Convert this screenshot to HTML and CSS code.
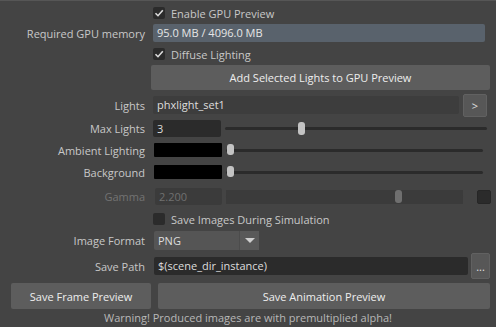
FILE: index.html
```html
<!DOCTYPE html>
<html lang="en">
<head>
    <meta charset="UTF-8">
    <title>GPU Preview</title>
    <link rel="stylesheet" href="styles.css">
</head>
<body>
    <div class="panel">
        <div class="row r-enable">
            <span class="label"></span>
            <span class="check"><span class="box on"><svg viewBox="0 0 12 12"><path d="M2.5 6.2 L5 8.7 L9.8 3.2"/></svg></span>Enable GPU Preview</span>
        </div>
        <div class="row r-memory">
            <span class="label">Required GPU memory</span>
            <div class="field memory">95.0 MB / 4096.0 MB</div>
        </div>
        <div class="row r-diffuse">
            <span class="label"></span>
            <span class="check"><span class="box on"><svg viewBox="0 0 12 12"><path d="M2.5 6.2 L5 8.7 L9.8 3.2"/></svg></span>Diffuse Lighting</span>
        </div>
        <div class="row r-add">
            <button class="btn add">Add Selected Lights to GPU Preview</button>
        </div>
        <div class="row r-lights">
            <span class="label">Lights</span>
            <div class="field lights">phxlight_set1</div>
            <button class="btn small arrow">&gt;</button>
        </div>
        <div class="row r-max">
            <span class="label">Max Lights</span>
            <div class="field num">3</div>
            <div class="slider max"><div class="track"></div><div class="handle" style="left: 73px"></div></div>
        </div>
        <div class="row r-color">
            <span class="label">Ambient Lighting</span>
            <div class="swatch"></div>
            <div class="slider color"><div class="track"></div><div class="handle" style="left: 1px"></div></div>
        </div>
        <div class="row r-color">
            <span class="label">Background</span>
            <div class="swatch"></div>
            <div class="slider color"><div class="track"></div><div class="handle" style="left: 1px"></div></div>
        </div>
        <div class="row r-gamma disabled">
            <span class="label">Gamma</span>
            <div class="field num gamma">2.200</div>
            <div class="slider gamma"><div class="track"></div><div class="handle" style="left: 169px"></div></div>
            <div class="gamma-box"></div>
        </div>
        <div class="row r-save">
            <span class="label"></span>
            <span class="check"><span class="box"></span>Save Images During Simulation</span>
        </div>
        <div class="row r-format">
            <span class="label">Image Format</span>
            <div class="dropdown"><span class="value">PNG</span><span class="drop-arrow"></span></div>
        </div>
        <div class="row r-path">
            <span class="label">Save Path</span>
            <div class="field path">$(scene_dir_instance)</div>
            <button class="btn small dots">...</button>
        </div>
        <div class="row r-buttons">
            <button class="btn frame">Save Frame Preview</button>
            <button class="btn anim">Save Animation Preview</button>
        </div>
        <div class="warning">Warning! Produced images are with premultiplied alpha!</div>
    </div>
</body>
</html>
```

FILE: styles.css
```css
/* Base */
body {
    margin: 0;
    background-color: #444444;
    font-family: "Open Sans", "Liberation Sans", Arial, sans-serif;
    font-size: 11px;
    color: #c8c8c8;
}
.panel {
    border-top: 1px solid #565656;
    padding-top: 2px;
    height: 324px;
    overflow: hidden;
}

/* Rows */
.row {
    display: flex;
    align-items: center;
}
.label {
    flex: none;
    width: 145px;
    margin-right: 8px;
    text-align: right;
    white-space: nowrap;
}
.r-enable { height: 20px; }
.r-memory { height: 20px; }
.r-diffuse { height: 22px; }
.r-add { height: 25px; padding-left: 151px; }
.r-lights { height: 26px; margin-top: 2px; }
.r-max { height: 21px; }
.r-color { height: 22px; }
.r-gamma { height: 23px; margin-top: 2px; }
.r-save { height: 22px; }
.r-format { height: 20px; }
.r-path { height: 28px; margin-top: 2px; }
.r-buttons { height: 26px; margin-top: 3px; padding-left: 11px; }

/* Checkboxes */
.check {
    display: flex;
    align-items: center;
    white-space: nowrap;
}
.box {
    width: 12px;
    height: 12px;
    margin-right: 6px;
    background-color: #2b2b2b;
    border-radius: 2px;
}
.box svg {
    display: block;
    width: 12px;
    height: 12px;
    fill: none;
    stroke: #dcdcdc;
    stroke-width: 1.6;
}

/* Fields */
.field {
    height: 18px;
    line-height: 18px;
    padding: 0 4px;
    box-sizing: border-box;
    color: #dddddd;
    background-color: #2b2b2b;
    border-radius: 2px;
    white-space: nowrap;
    overflow: hidden;
}
.memory {
    width: 332px;
    background-color: #59626c;
    color: #e6e6e6;
}
.lights {
    width: 306px;
    background-color: #3d3d3d;
}
.num {
    width: 68px;
    height: 17px;
    line-height: 17px;
}
.gamma {
    margin-left: 2px;
    width: 67px;
    background-color: #3b3b3b;
    color: #707070;
}
.path {
    margin-left: 1px;
    width: 314px;
}

/* Buttons */
.btn {
    font-family: inherit;
    font-size: 11px;
    color: #eeeeee;
    background-color: #5d5d5d;
    border: none;
    border-radius: 2px;
    padding: 0;
    height: 100%;
}
.add { width: 339px; }
.small {
    background-color: #575757;
    border: 1px solid #616161;
    box-sizing: border-box;
    color: #e0e0e0;
}
.arrow {
    margin-left: 4px;
    width: 24px;
    height: 23px;
}
.dots {
    margin-left: 3px;
    width: 19px;
    height: 26px;
    line-height: 26px;
}
.frame { width: 140px; }
.anim { width: 332px; margin-left: 7px; }

/* Sliders */
.slider {
    position: relative;
    height: 14px;
    display: flex;
    align-items: center;
}
.track {
    width: 100%;
    height: 3px;
    background-color: #2b2b2b;
    border-radius: 2px;
}
.handle {
    position: absolute;
    top: 0;
    width: 7px;
    height: 13px;
    background-color: #c3c3c3;
    border-radius: 3px;
}
.slider.max { margin-left: 4px; width: 262px; }
.slider.color { margin-left: 4px; width: 257px; }
.slider.color .handle { top: 1px; height: 11px; }
.slider.gamma { margin-left: 4px; width: 237px; }
.slider.gamma .track { background-color: #3b3b3b; }
.slider.gamma .handle { background-color: #6f6f6f; }

.swatch {
    margin-left: 1px;
    width: 68px;
    height: 14px;
    background-color: #000000;
    border-radius: 1px;
}
.gamma-box {
    margin-left: 14px;
    width: 12px;
    height: 12px;
    background-color: #2b2b2b;
    border: 1px solid #262626;
    border-radius: 2px;
}
.disabled .label { color: #737373; }

/* Dropdown */
.dropdown {
    margin-left: 1px;
    width: 105px;
    height: 19px;
    display: flex;
    background-color: #555555;
    border-radius: 2px;
}
.dropdown .value {
    flex: 1;
    line-height: 19px;
    padding-left: 4px;
    color: #dddddd;
    border-right: 1px solid #4c4c4c;
}
.drop-arrow {
    width: 19px;
    position: relative;
    background-color: #595959;
}
.drop-arrow::after {
    content: "";
    position: absolute;
    left: 5px;
    top: 7px;
    border-left: 5px solid transparent;
    border-right: 5px solid transparent;
    border-top: 5px solid #cfcfcf;
}

.warning {
    text-align: center;
    margin-top: 1px;
    color: #b8b8b8;
}
```
